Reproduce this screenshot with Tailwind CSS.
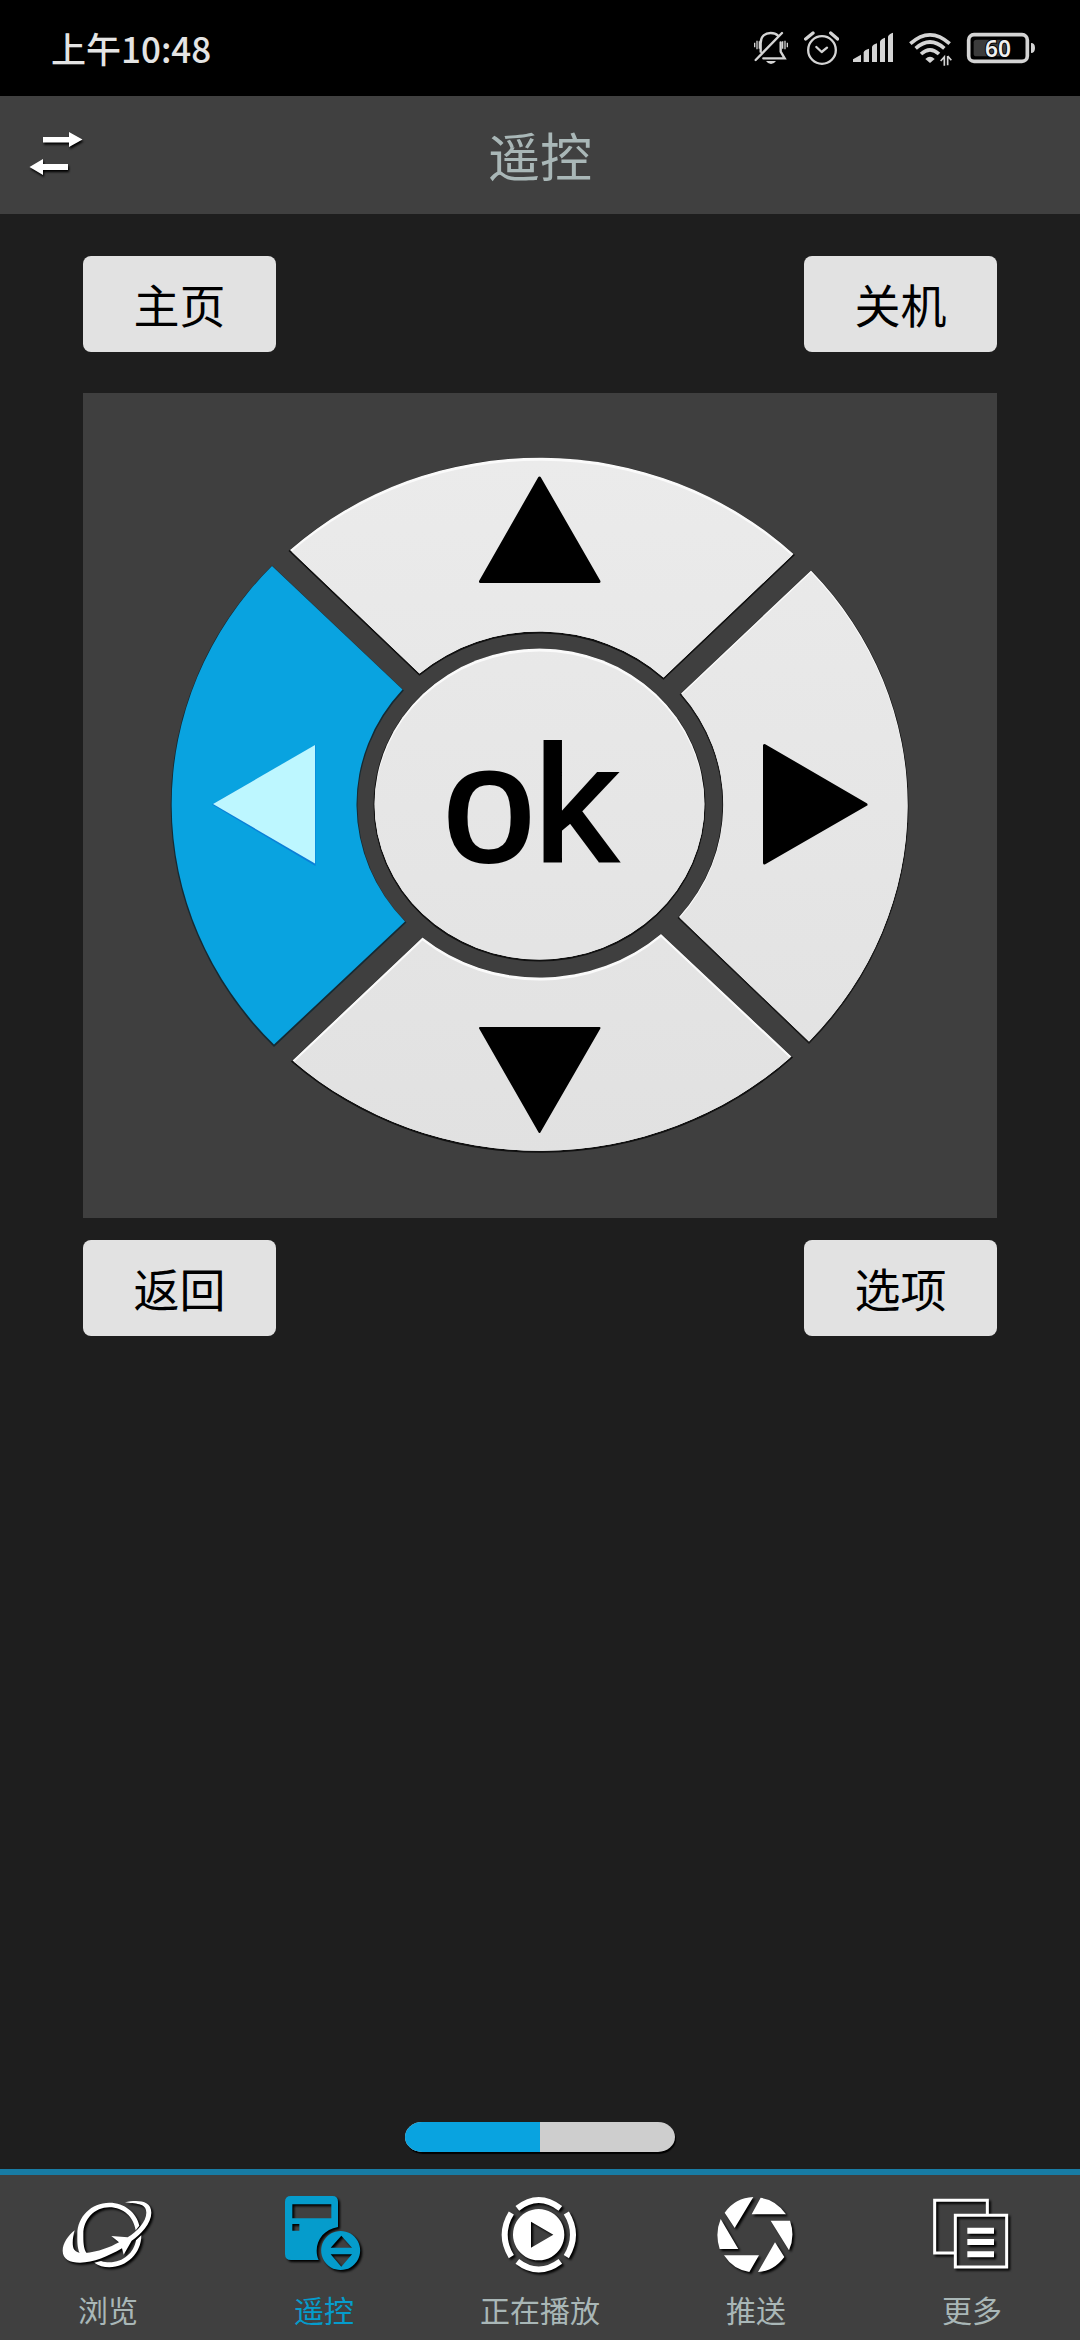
<!DOCTYPE html>
<html lang="zh-CN">
<head>
<meta charset="utf-8">
<meta name="viewport" content="width=device-width, initial-scale=1">
<title>遥控</title>
<script src="https://cdn.jsdelivr.net/npm/@tailwindcss/browser@4"></script>
</head>
<body class="flex min-h-screen flex-col bg-[#1e1e1e] font-['Noto_Sans_CJK_SC',sans-serif] text-black">

<!-- Status bar -->
<div class="flex h-24 items-center justify-between bg-black pr-11 pl-[51px]">
  <span class="text-[35px] leading-10 font-medium text-[#e4e4e4]">上午10:48</span>
  <div class="flex items-center gap-[13px] text-[#d4d4d4]">
    <svg class="h-[37px] w-9" viewBox="99 90 108 111" fill="none" stroke="currentColor" stroke-width="7" stroke-linecap="round" aria-label="静音">
      <path d="M107 180 186 99M122 155V130C122 108 136 99 152 99 160 99 168 101 173 106M130 175H194L182 155V127"/>
      <path d="M104 128V142M111 122V148M118 124V146M188 124V146M195 122V148M202 128V142" stroke-width="4" stroke-linecap="butt"/>
      <path d="M138 183H168Q162 192 153 192 144 192 138 183Z" fill="currentColor" stroke="none"/>
    </svg>
    <svg class="h-[37px] w-[37px]" viewBox="246 90 111 111" fill="none" stroke="currentColor" stroke-width="7" stroke-linecap="round" stroke-linejoin="round" aria-label="闹钟">
      <circle cx="306" cy="150" r="41.500"/>
      <path d="M289 141 305 156 321 143"/>
      <path d="M257 117 279 99M332 99 353 117" stroke-width="10"/>
    </svg>
    <svg class="h-[37px] w-[42px]" viewBox="396 90 126 111" fill="currentColor" aria-label="信号">
      <path d="M399 186V178L423 164V186ZM431 186V157Q433 150 447 146V186ZM456 186V141Q458 134 471 130V186ZM480 186V125Q482 117 495 113V186ZM504 186V110Q506 102 519 98V186Z"/>
    </svg>
    <svg class="h-[37px] w-[46px]" viewBox="561 90 138 111" fill="none" stroke="currentColor" stroke-width="11" aria-label="无线网络">
      <path d="M571 131Q630 78 689 131M587 145Q630 107 673 145M603 162Q630 137 657 162"/>
      <path d="M630 189 616 177Q630 164 644 177Z" fill="currentColor" stroke="none"/>
      <path d="M673 197V171L662 183M683 168V196M683 168 694 181" stroke-width="5"/>
    </svg>
    <svg class="h-[37px] w-[70px]" viewBox="738 90 210 111" aria-label="电量">
      <rect x="746" y="104" width="176" height="80" rx="16" fill="none" stroke="currentColor" stroke-width="11"/>
      <rect x="761" y="119" width="98" height="50" rx="8" fill="#3c3c3c"/>
      <path d="M933 129Q945 129 945 144 945 159 933 159Z" fill="currentColor"/>
      <text x="834" y="171" text-anchor="middle" class="font-['Noto_Sans',sans-serif] text-[68px] font-semibold" fill="#f0f0f0" stroke="#000" stroke-width="6" paint-order="stroke">60</text>
    </svg>
  </div>
</div>

<!-- Title bar -->
<header class="grid h-[118px] grid-cols-[1fr_auto_1fr] items-center bg-[#404040] px-6">
  <button type="button" aria-label="切换设备" class="justify-self-start">
    <svg class="h-[52px] w-16 drop-shadow-[1px_2px_1px_#000]" viewBox="24 129 64 52" fill="#fff">
      <path d="M43 137H69V132L82.500 139.500 69 147V142.500H43ZM68 164H43V159L29.500 167 43 175V170H68Z"/>
    </svg>
  </button>
  <h1 class="pb-px text-[52px] leading-[72px] text-[#a9b7b7]">遥控</h1>
</header>

<!-- Remote control -->
<main class="flex flex-1 flex-col px-[83px] pt-[42px] pb-[17px]">
  <div class="flex justify-between">
    <button type="button" class="h-24 w-[193px] rounded-lg bg-[#e2e2e2] pb-[3px] text-[46px] leading-none">主页</button>
    <button type="button" class="h-24 w-[193px] rounded-lg bg-[#e2e2e2] pb-[3px] text-[46px] leading-none">关机</button>
  </div>

  <svg class="absolute size-0" aria-hidden="true">
    <defs>
      <linearGradient id="plate" gradientUnits="userSpaceOnUse" x1="0" y1="457" x2="0" y2="1152">
        <stop offset="0" stop-color="#ebebeb"/><stop offset="1" stop-color="#e1e1e1"/>
      </linearGradient>
      <path id="up" d="M290 550A367.500 347 0 0 1 793.500 554L663.500 677.500A183 173 0 0 0 419.500 673.500Z"/>
      <path id="right" d="M811 570.500A367.500 347 0 0 1 809 1041.500L679 917A183 173 0 0 0 681 693.500Z"/>
      <path id="down" d="M422.500 937.500A183 173 0 0 0 661 934L791.500 1056.500A367.500 347 0 0 1 292.500 1060.500Z"/>
      <path id="left" d="M272 566A367.500 347 0 0 0 274 1044.500L405 921.500A183 173 0 0 1 402.500 689.500Z"/>
      <ellipse id="center" cx="539.500" cy="804" rx="165" ry="155.500"/>
      <clipPath id="clip-up"><use href="#up"/></clipPath>
      <clipPath id="clip-right"><use href="#right"/></clipPath>
      <clipPath id="clip-down"><use href="#down"/></clipPath>
      <clipPath id="clip-center"><use href="#center"/></clipPath>
    </defs>
  </svg>

  <div class="mt-[41px] grid aspect-[914/825] bg-[#3f3f3f]">
    <button type="button" aria-label="上" class="pointer-events-none [grid-area:1/1]">
      <svg class="size-full" viewBox="83 393 914 825">
        <use href="#up" y="1" fill="#111" stroke="#111" stroke-width="2"/>
        <use href="#up" fill="#fafafa" class="pointer-events-auto"/>
        <g clip-path="url(#clip-up)"><use href="#up" y="3" fill="url(#plate)"/></g>
        <path d="M539.500 478 480.500 581.500H599Z" stroke="#000" stroke-width="3" stroke-linejoin="round"/>
      </svg>
    </button>
    <button type="button" aria-label="左" class="pointer-events-none [grid-area:1/1]">
      <svg class="size-full" viewBox="83 393 914 825">
        <use href="#left" y="1" fill="#152a33" stroke="#152a33" stroke-width="2"/>
        <use href="#left" fill="#09a3e0" class="pointer-events-auto"/>
        <path d="M212 804.500 315.500 745V866Z" fill="#0b7fd8"/>
        <path d="M213 804 315 745V863.500Z" fill="#bdf7ff"/>
      </svg>
    </button>
    <button type="button" aria-label="右" class="pointer-events-none [grid-area:1/1]">
      <svg class="size-full" viewBox="83 393 914 825">
        <use href="#right" y="1" fill="#181818" stroke="#181818" stroke-width="2"/>
        <use href="#right" fill="#fafafa" class="pointer-events-auto"/>
        <g clip-path="url(#clip-right)"><use href="#right" y="2" fill="url(#plate)"/></g>
        <path d="M764.500 745.500V863L866 804.500Z" stroke="#000" stroke-width="3" stroke-linejoin="round"/>
      </svg>
    </button>
    <button type="button" aria-label="下" class="pointer-events-none [grid-area:1/1]">
      <svg class="size-full" viewBox="83 393 914 825">
        <use href="#down" y="1" fill="#111" stroke="#111" stroke-width="2"/>
        <use href="#down" fill="#fafafa" class="pointer-events-auto"/>
        <g clip-path="url(#clip-down)"><use href="#down" y="3" fill="url(#plate)"/></g>
        <path d="M480 1028H599.500L539.500 1132Z" stroke="#000" stroke-width="2" stroke-linejoin="round"/>
      </svg>
    </button>
    <button type="button" class="pointer-events-none [grid-area:1/1]">
      <svg class="size-full" viewBox="83 393 914 825">
        <use href="#center" y="1" fill="#111" stroke="#111" stroke-width="2"/>
        <use href="#center" fill="#fafafa" class="pointer-events-auto"/>
        <g clip-path="url(#clip-center)"><use href="#center" y="3" fill="url(#plate)"/></g>
        <text x="530" y="860" text-anchor="middle" class="text-[164px]" font-family="'Liberation Sans', Arial, sans-serif" stroke="#000" stroke-width="4">ok</text>
      </svg>
    </button>
  </div>

  <div class="mt-[22px] flex justify-between">
    <button type="button" class="h-24 w-[193px] rounded-lg bg-[#e2e2e2] pb-[3px] text-[46px] leading-none">返回</button>
    <button type="button" class="h-24 w-[193px] rounded-lg bg-[#e2e2e2] pb-[3px] text-[46px] leading-none">选项</button>
  </div>

  <!-- Page indicator -->
  <div class="mt-auto flex h-[30px] w-[270px] self-center overflow-hidden rounded-[17px/15px] bg-[#cecece] shadow-[1px_2px_1px_#000]">
    <div class="w-1/2 bg-[#09a3e0]"></div>
  </div>
</main>

<!-- Tab bar -->
<nav class="grid grid-cols-5 border-t-6 border-[#187ca5] bg-[#404040] text-[30px] leading-9 text-[#a9b7b7]">
  <a href="#browse" class="flex flex-col items-center gap-4 pt-5 pb-[13px]">
    <svg class="h-20 w-[100px] drop-shadow-[2px_2px_1px_#000]" viewBox="84 105 300 240" fill="#fff">
      <path d="M285 127C320 119 364 120 364 158 364 190 332 224 305 242L281 284 276 265C235 289 190 308 150 308 120 308 98 297 98 272 98 250 115 226 134 211 128 232 125 258 133 269 139 277 150 280 164 279 205 276 240 262 267 247L244 228 293 232C322 214 349 184 349 158 349 128 315 132 285 127Z"/>
      <path d="M149 280C141 262 142 240 142 222 142 170 184 128 238 128 284 128 320 158 328 197L317 211C311 171 280 142 238 142 194 142 160 178 160 222 160 244 160 265 170 280Z"/>
      <path d="M334 226C334 280 290 322 238 322 221 322 206 317 193 308L213 303C222 306 229 307 238 307 280 307 312 278 318 241Z"/>
    </svg>
    <span>浏览</span>
  </a>
  <a href="#remote" aria-current="page" class="flex flex-col items-center gap-4 pt-5 pb-[13px] text-[#059ccc]">
    <svg class="h-20 w-[100px] drop-shadow-[2px_2px_1px_#000]" viewBox="732 105 300 240" fill="currentColor" fill-rule="evenodd">
      <path d="M783 108H907Q924 108 924 125V201C884 207 860 238 860 272 860 282 862 292 866 300H783Q765 300 765 282V125Q765 108 783 108ZM787 133V175H904V133ZM787 192V212H808V192Z"/>
      <path d="M932 213A58.500 58.500 0 1 1 931.900 213ZM934 227 902 263H966ZM902 283 934 320 966 283Z"/>
    </svg>
    <span>遥控</span>
  </a>
  <a href="#playing" class="flex flex-col items-center gap-4 pt-5 pb-[13px]">
    <svg class="h-20 w-[100px] drop-shadow-[2px_2px_1px_#000]" viewBox="90 105 300 240" fill="#fff" fill-rule="evenodd">
      <path d="M236 147A77 77 0 1 1 235.900 147ZM213 185V263L280 224Z"/>
      <path d="M172 145Q236 95 301 145M319 159Q359 224 319 290M301 304Q236 353 172 304M154 290Q114 224 154 159" fill="none" stroke="#fff" stroke-width="18"/>
    </svg>
    <span>正在播放</span>
  </a>
  <a href="#push" class="flex flex-col items-center gap-4 pt-5 pb-[13px]">
    <svg class="h-20 w-[100px] drop-shadow-[2px_2px_1px_#000]" viewBox="738 105 300 240" fill="#fff">
      <path d="M880 111 824 204 794 158Q826 113 880 111ZM902 113Q950 121 978 163H875ZM932 182H990Q1006 228 987 271ZM945 247 973 291Q942 333 894 336ZM792 286H897L868 336Q820 329 792 286ZM782 177 835 267H779Q764 220 782 177Z"/>
    </svg>
    <span>推送</span>
  </a>
  <a href="#more" class="flex flex-col items-center gap-4 pt-5 pb-[13px]">
    <svg class="h-20 w-[100px] drop-shadow-[2px_2px_1px_#000]" viewBox="126 105 300 240" fill="none" stroke="#fff" stroke-width="9">
      <path d="M322 162V121H164V279H222M226 166H380V321H226Z"/>
      <path d="M262 212H342M262 246H342M262 283H342" stroke-width="18"/>
    </svg>
    <span>更多</span>
  </a>
</nav>
</body>
</html>
